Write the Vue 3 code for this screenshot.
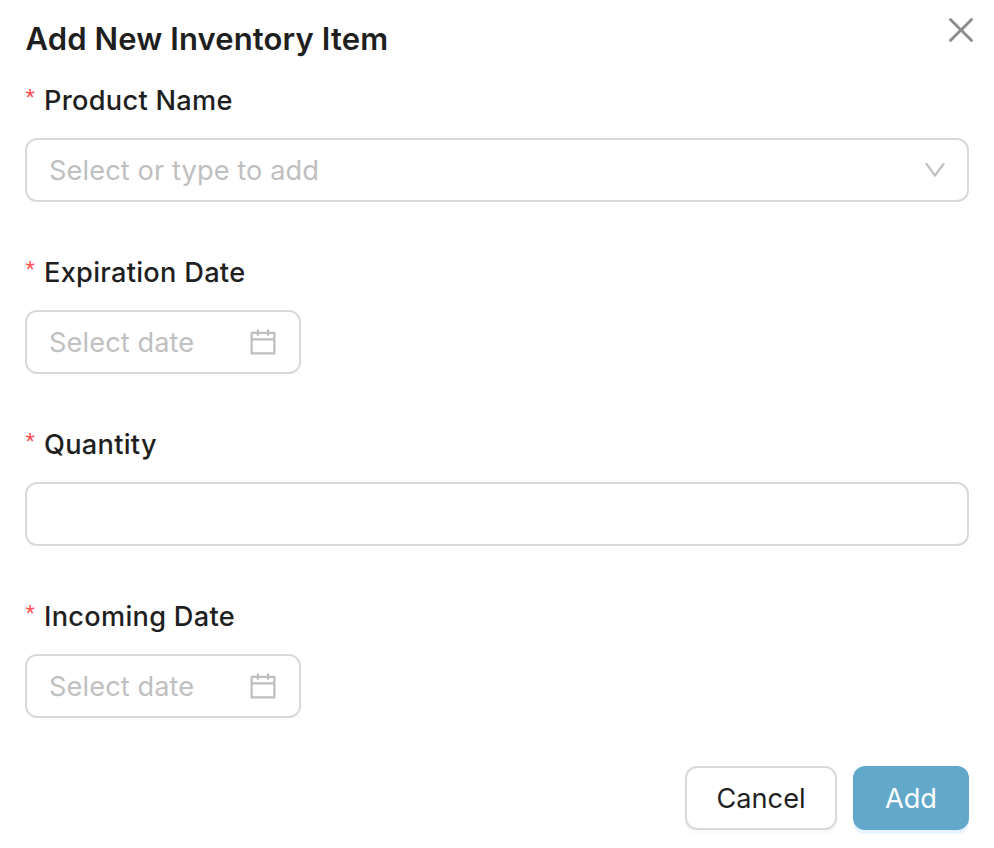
<script setup>
const fields = [
  { label: 'Product Name', type: 'select', placeholder: 'Select or type to add' },
  { label: 'Expiration Date', type: 'date', placeholder: 'Select date' },
  { label: 'Quantity', type: 'number', placeholder: '' },
  { label: 'Incoming Date', type: 'date', placeholder: 'Select date' },
]
</script>

<template>
  <main class="modal">
    <header class="header">
      <h1 class="title">Add New Inventory Item</h1>
      <svg class="close" viewBox="64 64 896 896" aria-label="Close">
        <path d="M799.9 166.3l57.8 57.8L569.9 512l287.8 287.8-57.8 57.9L512 569.9 224.2 857.7l-57.9-57.9L454.1 512 166.3 224.2l57.9-57.9L512 454.1z" />
      </svg>
    </header>

    <form class="form" @submit.prevent>
      <section v-for="field in fields" :key="field.label" class="item">
        <div class="label"><span class="star">*</span><span>{{ field.label }}</span></div>
        <div class="control" :class="field.type">
          <span class="placeholder">{{ field.placeholder }}</span>
          <svg v-if="field.type === 'select'" class="arrow" viewBox="64 64 896 896">
            <path d="M884 256h-75c-5.1 0-9.9 2.5-12.9 6.6L512 654.2 227.9 262.6c-3-4.1-7.8-6.6-12.9-6.6h-75c-6.5 0-10.3 7.4-6.5 12.7l352.6 486.1c12.8 17.6 39 17.6 51.7 0l352.6-486.1c3.9-5.3.1-12.7-6.4-12.7z" />
          </svg>
          <svg v-if="field.type === 'date'" class="calendar" viewBox="64 64 896 896">
            <path d="M880 184H712v-64c0-4.4-3.6-8-8-8h-56c-4.4 0-8 3.6-8 8v64H384v-64c0-4.4-3.6-8-8-8h-56c-4.4 0-8 3.6-8 8v64H144c-17.7 0-32 14.3-32 32v664c0 17.7 14.3 32 32 32h736c17.7 0 32-14.3 32-32V216c0-17.7-14.3-32-32-32zm-40 656H184V460h656v380zM184 392V256h128v48c0 4.4 3.6 8 8 8h56c4.4 0 8-3.6 8-8v-48h256v48c0 4.4 3.6 8 8 8h56c4.4 0 8-3.6 8-8v-48h128v136H184z" />
          </svg>
        </div>
      </section>

      <footer class="footer">
        <button type="button" class="btn cancel">Cancel</button>
        <button type="submit" class="btn add">Add</button>
      </footer>
    </form>
  </main>
</template>

<style>
body {
  background: #fff;
}
</style>

<style scoped>
.modal {
  box-sizing: border-box;
  height: 848px;
  padding: 14px 25px 0;
  overflow: hidden;
  background: #fff;
  color: #1f1f1f;
  font-family: Inter, 'Liberation Sans', sans-serif;
  font-size: 27.2px;
}
.header {
  display: flex;
  justify-content: space-between;
  height: 64px;
  margin-right: -8px;
}
.title {
  margin: 0;
  padding-left: 0.5px;
  font-size: 31px;
  font-weight: 600;
  line-height: 50px;
  letter-spacing: 0.12px;
}
.close {
  width: 32px;
  height: 32px;
  fill: #8c8c8c;
}
.item {
  margin-bottom: 48px;
}
.label {
  display: flex;
  height: 44px;
  margin-bottom: 16px;
  font-weight: 500;
  line-height: 46px;
  letter-spacing: 0.28px;
}
.star {
  width: 18.5px;
  padding-left: 0.5px;
  color: #ff4d4f;
  font-family: 'Liberation Sans', sans-serif;
  font-size: 24px;
  font-weight: 400;
  line-height: 40px;
  letter-spacing: 0;
}
.control {
  box-sizing: border-box;
  display: flex;
  align-items: center;
  justify-content: space-between;
  height: 64px;
  padding: 0 22px;
  border: 2px solid #d9d9d9;
  border-radius: 12px;
}
.control.select {
  padding-right: 20px;
}
.control.date {
  width: 276px;
}
.placeholder {
  color: #bfbfbf;
  letter-spacing: 0.1px;
}
.arrow {
  width: 24px;
  height: 24px;
  fill: #bfbfbf;
}
.calendar {
  width: 28px;
  height: 28px;
  fill: #bfbfbf;
}
.footer {
  display: flex;
  justify-content: flex-end;
  gap: 16px;
}
.btn {
  box-sizing: border-box;
  height: 64px;
  padding: 0;
  border-radius: 12px;
  font: inherit;
}
.cancel {
  width: 152px;
  border: 2px solid #d9d9d9;
  background: #fff;
  color: #1f1f1f;
  box-shadow: 0 4px 0 rgba(0, 0, 0, 0.02);
}
.add {
  width: 116px;
  border: 0;
  background: #61a8cb;
  color: #fff;
  box-shadow: 0 4px 0 rgba(5, 145, 255, 0.1);
}
</style>
